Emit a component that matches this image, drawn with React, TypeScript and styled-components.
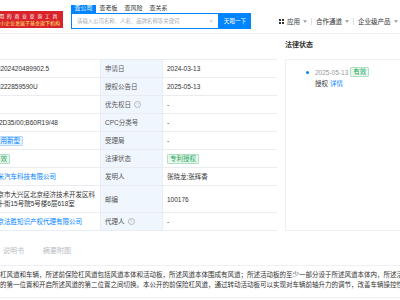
import { Fragment } from 'react';
import styled, { createGlobalStyle } from 'styled-components';

const GlobalStyle = createGlobalStyle`
  html, body {
    margin: 0;
    padding: 0;
    background: #fff;
    overflow: hidden;
  }
  body {
    font-family: "Liberation Sans", "Noto Sans CJK SC", sans-serif;
    color: #333;
  }
`;

const Viewport = styled.div`
  width: 400px;
  height: 300px;
  overflow: hidden;
`;

// page is scrolled a little to the right, so its left part is cut off
const Page = styled.div`
  width: 500px;
  margin-left: -74px;
`;

const Header = styled.header`
  display: flex;
  align-items: flex-start;
  height: 33px;
  border-bottom: 1px solid #eef0f3;
`;

const Banner = styled.div`
  margin-left: 27px;
  margin-top: 11px;
  width: 110px;
  height: 17px;
  box-sizing: border-box;
  padding-right: 3px;
  background: #d8232a;
  overflow: hidden;
  display: flex;
  flex-direction: column;
  align-items: flex-end;
  justify-content: center;
  white-space: nowrap;
`;

const BannerTop = styled.div`
  font-size: 5px;
  line-height: 7px;
  letter-spacing: 2.6px;
  color: #fff;
`;

const BannerBottom = styled.div`
  font-size: 5px;
  line-height: 7px;
  color: #ffe36e;
`;

const Search = styled.div`
  margin-left: 8px;
  margin-top: 5px;
  width: 180px;
`;

const SearchTabs = styled.div`
  display: flex;
  height: 7.5px;
`;

const SearchTab = styled.span<{ $active?: boolean }>`
  padding: 0 3.5px;
  font-size: 6px;
  line-height: 7.5px;
  background: ${({ $active }) => ($active ? '#0084ff' : 'transparent')};
  color: ${({ $active }) => ($active ? '#fff' : '#333')};
`;

const SearchBar = styled.div`
  display: flex;
  height: 16px;
`;

const SearchInput = styled.div`
  flex: 1;
  display: flex;
  align-items: center;
  padding: 0 5px;
  border: 1px solid #0084ff;
  font-size: 5.4px;
  color: #a9adb4;
  white-space: nowrap;
`;

const Clear = styled.span`
  margin-left: auto;
  font-size: 6px;
  color: #b8bcc2;
`;

const SearchButton = styled.div`
  width: 32px;
  display: flex;
  align-items: center;
  justify-content: center;
  background: #0084ff;
  color: #fff;
  font-size: 5.6px;
`;

const Nav = styled.nav`
  margin-left: 28px;
  margin-top: 17px;
  display: flex;
  align-items: center;
  height: 8px;
  font-size: 6.5px;
  color: #333;
  white-space: nowrap;
`;

const NavItem = styled.span`
  display: flex;
  align-items: center;
  gap: 3px;
`;

const NavSep = styled.span`
  width: 1px;
  height: 7px;
  margin: 0 4px;
  background: #dcdfe3;
`;

const Main = styled.div`
  display: flex;
  gap: 8px;
  align-items: stretch;
`;

const LeftCol = styled.div`
  width: 351px;
  flex-shrink: 0;
  padding-top: 25px;
`;

const RightCol = styled.div`
  flex: 1;
  display: flex;
  flex-direction: column;
`;

const SectionTitle = styled.div`
  height: 25px;
  box-sizing: border-box;
  padding-top: 6px;
  font-size: 7px;
  line-height: 10px;
  font-weight: bold;
  color: #333;
`;

const InfoTable = styled.div`
  display: grid;
  grid-template-columns: 60px 114px 62px 115px;
  border-right: 1px solid #e9edf2;
  border-bottom: 1px solid #e9edf2;
`;

const Cell = styled.div<{ $label?: boolean }>`
  display: flex;
  align-items: center;
  flex-wrap: wrap;
  padding: 4px;
  min-height: 9px;
  border-top: 1px solid #e9edf2;
  border-left: 1px solid #e9edf2;
  background: ${({ $label }) => ($label ? '#f0f6fe' : '#fff')};
  font-size: 6.5px;
  line-height: 9px;
  color: ${({ $label }) => ($label ? '#555' : '#333')};
`;

const Tag = styled.span<{ $tone: 'blue' | 'green' }>`
  display: inline-block;
  margin: -0.5px 0;
  padding: 0 2px;
  border: 1px solid ${({ $tone }) => ($tone === 'blue' ? '#b5d8ff' : '#aee0c1')};
  border-radius: 1px;
  background: ${({ $tone }) => ($tone === 'blue' ? '#e8f3ff' : '#e9f8ef')};
  color: ${({ $tone }) => ($tone === 'blue' ? '#0084ff' : '#23a55a')};
  font-size: 6.5px;
  line-height: 8px;
  white-space: nowrap;
`;

const Link = styled.span`
  color: #0084ff;
  white-space: nowrap;
`;

const Help = styled.span`
  display: inline-flex;
  align-items: center;
  justify-content: center;
  width: 5px;
  height: 5px;
  margin-left: 3px;
  border: 0.7px solid #b4b8bf;
  border-radius: 50%;
  font-size: 4px;
  line-height: 5px;
  color: #b4b8bf;
`;

const StatusCard = styled.div`
  flex: 1;
  padding: 7px 8px 7px 20px;
  border: 1px solid #eef0f3;
`;

const StatusRow = styled.div`
  display: flex;
  align-items: center;
  height: 10px;
  gap: 2px;
`;

const Dot = styled.span`
  flex-shrink: 0;
  width: 3px;
  height: 3px;
  margin-right: 4px;
  border-radius: 50%;
  background: #0084ff;
`;

const StatusDate = styled.span`
  font-size: 6.5px;
  color: #999;
`;

const StatusText = styled.div`
  margin-top: 2px;
  padding-left: 9px;
  font-size: 6.5px;
  line-height: 10px;
  color: #333;

  span {
    margin-left: 2px;
    color: #0084ff;
  }
`;

const DetailTabs = styled.div`
  display: flex;
  gap: 19px;
  margin-top: 10px;
  height: 25px;
  box-sizing: border-box;
  padding-left: 30px;
  padding-top: 6px;
  border-bottom: 1px solid #eef0f3;
  font-size: 7px;
  line-height: 8px;
  color: #b8bcc3;
`;

const Abstract = styled.p`
  margin: 3px 0 0 9px;
  width: 488px;
  padding-bottom: 8px;
  border-bottom: 1px solid #f0f1f4;
  font-family: "Noto Sans CJK SC", sans-serif;
  font-size: 6.5px;
  line-height: 10px;
  color: #333;
`;

const GridIcon = () => (
  <svg width="5" height="5" viewBox="0 0 10 10">
    <rect x="0" y="0" width="4" height="4" fill="#333" />
    <rect x="6" y="0" width="4" height="4" fill="#333" />
    <rect x="0" y="6" width="4" height="4" fill="#333" />
    <rect x="6" y="6" width="4" height="4" fill="#333" />
  </svg>
);

const Caret = () => (
  <svg width="4" height="3" viewBox="0 0 8 5">
    <path d="M0 0 L8 0 L4 5 Z" fill="#999" />
  </svg>
);

type Value = string | { tag: string; tone: 'blue' | 'green' } | { link: string };

interface Row {
  label1: string;
  value1: Value;
  label2: string;
  help?: boolean;
  value2: Value;
}

const rows: Row[] = [
  { label1: '申请号', value1: 'CN202420489902.5', label2: '申请日', value2: '2024-03-13' },
  { label1: '授权公告号', value1: 'CN222859590U', label2: '授权公告日', value2: '2025-05-13' },
  { label1: '优先权号', value1: '-', label2: '优先权日', help: true, value2: '-' },
  { label1: 'IPC分类号', value1: 'B62D35/00;B60R19/48', label2: 'CPC分类号', value2: '-' },
  { label1: '专利类型', value1: { tag: '实用新型', tone: 'blue' }, label2: '受理局', value2: '-' },
  {
    label1: '当前状态',
    value1: { tag: '有效', tone: 'green' },
    label2: '法律状态',
    value2: { tag: '专利授权', tone: 'green' },
  },
  { label1: '申请人', value1: { link: '小米汽车科技有限公司' }, label2: '发明人', value2: '张晓龙;张辉香' },
  {
    label1: '地址',
    value1: '北京市大兴区北京经济技术开发区科创十街15号院5号楼6层618室',
    label2: '邮编',
    value2: '100176',
  },
  { label1: '代理机构', value1: { link: '北京法胜知识产权代理有限公司' }, label2: '代理人', help: true, value2: '-' },
];

const renderValue = (v: Value) => {
  if (typeof v === 'string') return v;
  if ('tag' in v) return <Tag $tone={v.tone}>{v.tag}</Tag>;
  return <Link>{v.link}</Link>;
};

const abstract =
  '本公开提供一种前保险杠风道和车辆，所述前保险杠风道包括风道本体和活动板，所述风道本体围成有风道；所述活动板的至少一部分设于所述风道本体内，所述活动板可转动以在封闭所述风道的第一位置和开启所述风道的第二位置之间切换。本公开的前保险杠风道，通过转动活动板可以实现对车辆前轴升力的调节，改善车辆操控性能。';

export default function App() {
  return (
    <>
      <GlobalStyle />
      <Viewport>
        <Page>
          <Header>
            <Banner>
              <BannerTop>中国人都在用的商业查询工具</BannerTop>
              <BannerBottom>国家中小企业发展子基金旗下机构</BannerBottom>
            </Banner>
            <Search>
              <SearchTabs>
                <SearchTab $active>查公司</SearchTab>
                <SearchTab>查老板</SearchTab>
                <SearchTab>查风险</SearchTab>
                <SearchTab>查关系</SearchTab>
              </SearchTabs>
              <SearchBar>
                <SearchInput>
                  请输入公司名称、人名、品牌名称等关键词
                  <Clear>×</Clear>
                </SearchInput>
                <SearchButton>天眼一下</SearchButton>
              </SearchBar>
            </Search>
            <Nav>
              <NavItem>
                <GridIcon />
                应用
                <Caret />
              </NavItem>
              <NavSep />
              <NavItem>
                合作通道
                <Caret />
              </NavItem>
              <NavSep />
              <NavItem>
                企业级产品
                <Caret />
              </NavItem>
            </Nav>
          </Header>

          <Main>
            <LeftCol>
              <InfoTable>
                {rows.map((r) => (
                  <Fragment key={r.label1}>
                    <Cell $label>{r.label1}</Cell>
                    <Cell>{renderValue(r.value1)}</Cell>
                    <Cell $label>
                      {r.label2}
                      {r.help && <Help>?</Help>}
                    </Cell>
                    <Cell>{renderValue(r.value2)}</Cell>
                  </Fragment>
                ))}
              </InfoTable>
            </LeftCol>
            <RightCol>
              <SectionTitle>法律状态</SectionTitle>
              <StatusCard>
                <StatusRow>
                  <Dot />
                  <StatusDate>2025-05-13</StatusDate>
                  <Tag $tone="green">有效</Tag>
                </StatusRow>
                <StatusText>
                  授权<span>详情</span>
                </StatusText>
              </StatusCard>
            </RightCol>
          </Main>

          <DetailTabs>
            <span>权利要求</span>
            <span>说明书</span>
            <span>摘要附图</span>
          </DetailTabs>
          <Abstract>{abstract}</Abstract>
        </Page>
      </Viewport>
    </>
  );
}
